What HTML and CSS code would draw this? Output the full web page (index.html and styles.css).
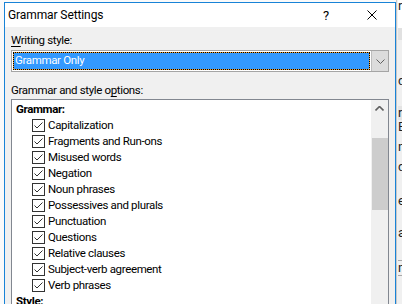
FILE: index.html
```html
<!DOCTYPE html>
<html lang="en">
<head>
  <meta charset="UTF-8">
  <title>Grammar Settings</title>
  <link rel="stylesheet" href="styles.css">
</head>
<body>
  <div class="desktop">
    <!-- document window behind the dialog -->
    <div class="backwin">
      <div class="bw-row bw-top">r</div>
      <div class="bw-row bw-band"></div>
      <div class="bw-row bw-gap1"></div>
      <div class="bw-row">d</div>
      <div class="bw-row bw-gap2"></div>
      <div class="bw-row bw-shade">ro</div>
      <div class="bw-row">E</div>
      <div class="bw-row bw-gap3"></div>
      <div class="bw-row">n</div>
      <div class="bw-row bw-gap3"></div>
      <div class="bw-row">dr</div>
      <div class="bw-row bw-gap4"></div>
      <div class="bw-row">e</div>
      <div class="bw-row bw-gap2"></div>
      <div class="bw-row">ar</div>
      <div class="bw-row bw-gap5"></div>
      <div class="bw-row bw-line">n</div>
      <div class="bw-row bw-line"></div>
    </div>

    <div class="dialog">
      <div class="titlebar">
        <span class="title">Grammar Settings</span>
        <span class="tb-btn help">?</span>
        <span class="tb-btn close">
          <svg width="10" height="10" viewBox="0 0 10 10"><path d="M0.5 0.5 L9.5 9.5 M9.5 0.5 L0.5 9.5" stroke="#000" stroke-width="1"/></svg>
        </span>
      </div>

      <div class="content">
        <div class="field-label"><u>W</u>riting style:</div>
        <div class="combo">
          <div class="combo-value">
            <div class="focus"><div class="selected">Grammar Only</div></div>
          </div>
          <div class="combo-btn">
            <svg width="9" height="5" viewBox="0 0 9 5"><path d="M0.5 0.5 L4.5 4.5 L8.5 0.5" fill="none" stroke="#606060" stroke-width="1"/></svg>
          </div>
        </div>

        <div class="field-label options-label">Grammar and style o<u>p</u>tions:</div>
        <div class="listbox">
          <div class="items">
            <div class="group">Grammar:</div>
            <div class="item"><span class="check"></span>Capitalization</div>
            <div class="item"><span class="check"></span>Fragments and Run-ons</div>
            <div class="item"><span class="check"></span>Misused words</div>
            <div class="item"><span class="check"></span>Negation</div>
            <div class="item"><span class="check"></span>Noun phrases</div>
            <div class="item"><span class="check"></span>Possessives and plurals</div>
            <div class="item"><span class="check"></span>Punctuation</div>
            <div class="item"><span class="check"></span>Questions</div>
            <div class="item"><span class="check"></span>Relative clauses</div>
            <div class="item"><span class="check"></span>Subject-verb agreement</div>
            <div class="item"><span class="check"></span>Verb phrases</div>
            <div class="group">Style:</div>
            <div class="item"><span class="check"></span>Clichés</div>
          </div>
          <div class="scrollbar">
            <div class="sb-arrow">
              <svg width="9" height="5" viewBox="0 0 9 5"><path d="M0.5 4.5 L4.5 0.5 L8.5 4.5" fill="none" stroke="#606060" stroke-width="1.6"/></svg>
            </div>
            <div class="sb-thumb"></div>
          </div>
        </div>
      </div>
    </div>
  </div>
</body>
</html>
```

FILE: styles.css
```css
body {
  margin: 0;
  font-family: Roboto, "Noto Sans", sans-serif;
  font-size: 11.5px;
  letter-spacing: -0.35px;
  color: #000;
}
.desktop {
  position: relative;
  width: 402px;
  height: 304px;
  overflow: hidden;
  background: #fafafa;
}

/* background window on the right */
.backwin {
  position: absolute;
  left: 396px;
  top: 0;
  width: 10px;
  height: 304px;
  background: #f0f0f0;
  border-left: 1px solid #c8c8c8;
  font-size: 13px;
  line-height: 14px;
  letter-spacing: 0;
  color: #222;
  padding-left: 1px;
}
.bw-row { height: 14px; }
.bw-top { height: 28px; background: #fff; line-height: 12px; }
.bw-band { height: 12px; background: #e1e1e1; }
.bw-gap1 { height: 34px; }
.bw-gap2 { height: 18px; }
.bw-gap3 { height: 6px; }
.bw-gap4 { height: 20px; }
.bw-gap5 { height: 20px; }
.bw-shade { background: #e4e4e4; }
.bw-line { border-top: 1px solid #a8a8a8; }

/* dialog */
.dialog {
  position: absolute;
  left: 4px;
  top: 2px;
  width: 390px;
  height: 380px;
  border: 1px solid #1883d7;
  border-bottom: none;
  background: #f0f0f0;
}
.titlebar {
  height: 24px;
  background: #fff;
  display: flex;
  align-items: center;
  padding-left: 3px;
}
.title {
  flex: 1;
  font-size: 12px;
  letter-spacing: -0.1px;
}
.tb-btn {
  width: 46px;
  height: 24px;
  display: flex;
  align-items: center;
  justify-content: center;
}
.help {
  font-size: 13px;
}

.content {
  padding: 6px 6px 0 6px;
}
.field-label {
  height: 15px;
  line-height: 15px;
}
.field-label u {
  text-underline-offset: 2px;
}
.options-label {
  margin-top: 11px;
}

/* combo box */
.combo {
  margin-top: 2px;
  height: 22px;
  box-sizing: border-box;
  border: 1px solid #a5a5a5;
  background: #fff;
  display: flex;
}
.combo-value {
  flex: 1;
  padding: 1px;
}
.focus {
  background: #f0a030;
  height: 18px;
}
.selected {
  box-sizing: border-box;
  height: 18px;
  border: 1px dotted #000;
  background: #3399ff;
  background-clip: padding-box;
  color: #fff;
  line-height: 15px;
  padding-left: 1px;
}
.combo-btn {
  width: 16px;
  background: #dcdcdc;
  border-left: 1px solid #bdbdbd;
  display: flex;
  align-items: center;
  justify-content: center;
}

/* list box */
.listbox {
  margin-top: 1px;
  height: 240px;
  border: 1px solid #828790;
  background: #fff;
  display: flex;
}
.items {
  flex: 1;
  padding-top: 1px;
}
.group {
  height: 16px;
  line-height: 16px;
  padding-left: 4px;
  font-weight: bold;
}
.item {
  height: 16px;
  line-height: 16px;
  padding-left: 20px;
  display: flex;
  align-items: flex-start;
}
.check {
  width: 13px;
  height: 13px;
  box-sizing: border-box;
  margin-top: 2px;
  margin-right: 3px;
  border: 1px solid #333;
  background: #fff url("data:image/svg+xml;utf8,<svg xmlns='http://www.w3.org/2000/svg' width='11' height='11'><path d='M1.5 5.5 L4 8 L9.5 2.5' fill='none' stroke='%23333' stroke-width='1'/></svg>") no-repeat center;
}
.scrollbar {
  width: 17px;
  background: #f0f0f0;
}
.sb-arrow {
  height: 17px;
  display: flex;
  align-items: center;
  justify-content: center;
}
.sb-thumb {
  margin: 21px 0 0 1px;
  height: 72px;
  background: #cdcdcd;
}
```
